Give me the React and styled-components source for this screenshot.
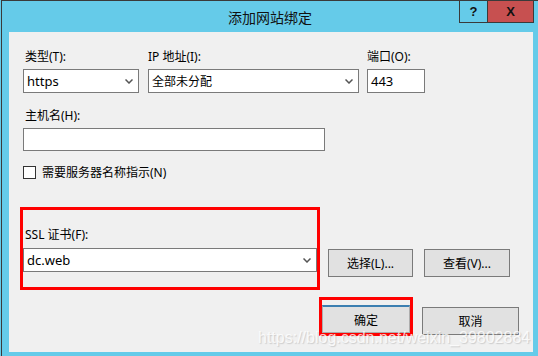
import React from "react";
import styled, { createGlobalStyle } from "styled-components";

const Global = createGlobalStyle`
  html, body { margin: 0; padding: 0; background: #65cbe9; overflow: hidden; }
  body { font-family: "Noto Sans", "Noto Sans CJK SC", sans-serif; }
`;

const Window = styled.div`
  position: relative;
  box-sizing: border-box;
  width: 537px;
  height: 356px;
  margin-left: 1px;
  background: #65cbe9;
  border-left: 1px solid #3a3a3a;
  border-top: 1px solid #3a3a3a;
  display: flex;
  flex-direction: column;
`;

const TitleBar = styled.div`
  position: relative;
  height: 31px;
  display: flex;
  align-items: center;
  justify-content: center;
  flex-shrink: 0;
`;

const Title = styled.div`
  font-family: "Noto Sans CJK SC", sans-serif;
  font-size: 14px;
  color: #111;
  margin-top: 1px;
`;

const Controls = styled.div`
  position: absolute;
  top: -1px;
  right: 4px;
  display: flex;
  height: 23px;
  border: 1px solid #3a3a3a;
  box-sizing: border-box;
`;

const CtrlBtn = styled.div`
  width: ${(p) => p.$w}px;
  background: ${(p) => p.$bg};
  display: flex;
  align-items: center;
  justify-content: center;
  font-family: "Liberation Sans", sans-serif;
  font-weight: bold;
  font-size: 13px;
  color: #111;
  & + & { border-left: 1px solid #3a3a3a; }
`;

const Client = styled.div`
  flex: 1;
  margin: 0 5px 4px 7px;
  background: #f0f0f0;
  padding: 17px 14px 0 14px;
  display: flex;
  flex-direction: column;
  font-size: 12px;
  color: #000;
`;

const Row = styled.div`
  display: flex;
  align-items: ${(p) => p.$align || "flex-start"};
  gap: ${(p) => p.$gap || 0}px;
  margin-top: ${(p) => p.$mt || 0}px;
  justify-content: ${(p) => p.$justify || "flex-start"};
`;

const Field = styled.div`
  display: flex;
  flex-direction: column;
  gap: ${(p) => p.$gap ?? 4}px;
  width: ${(p) => (p.$w ? p.$w + "px" : "auto")};
  margin-left: ${(p) => p.$ml || 0}px;
  margin-top: ${(p) => p.$mt || 0}px;
`;

const Label = styled.div`
  height: 16px;
  line-height: 16px;
  padding-left: ${(p) => p.$pl ?? 2}px;
  white-space: nowrap;
`;

const Box = styled.div`
  box-sizing: border-box;
  height: ${(p) => p.$h || 24}px;
  width: ${(p) => (p.$w ? p.$w + "px" : "100%")};
  background: #fff;
  border: 1px solid #7a7a7a;
  display: flex;
  align-items: center;
  padding-left: 3px;
  font-size: ${(p) => p.$fs || 12}px;
  position: relative;
`;

const Chevron = styled.svg`
  position: absolute;
  right: 5px;
  top: 50%;
  margin-top: -2px;
`;

const Select = ({ w, children, fs }) => (
  <Box $w={w} $fs={fs}>
    {children}
    <Chevron width="8" height="5" viewBox="0 0 8 5">
      <path d="M0.5 0.5 L4 4 L7.5 0.5" stroke="#555" strokeWidth="1.5" fill="none" />
    </Chevron>
  </Box>
);

const CheckRow = styled.div`
  display: flex;
  align-items: center;
  gap: 6px;
  margin-top: 13px;
  height: 16px;
`;

const Check = styled.div`
  box-sizing: border-box;
  width: 13px;
  height: 13px;
  background: #fff;
  border: 1px solid #333;
`;

const RedFrame = styled.div`
  box-sizing: border-box;
  border: 3px solid #ff0000;
  padding: ${(p) => p.$pad};
  width: ${(p) => p.$w}px;
  margin-left: ${(p) => p.$ml || 0}px;
  display: flex;
  flex-direction: column;
`;

const Button = styled.div`
  box-sizing: border-box;
  width: ${(p) => (p.$w ? p.$w + "px" : "100%")};
  height: 28px;
  background: #e1e1e1;
  border: 1px solid ${(p) => (p.$focus ? "#adadad" : "#7a7a7a")};
  border-top-color: ${(p) => (p.$focus ? "#3c7fb1" : "#7a7a7a")};
  border-top-width: ${(p) => (p.$focus ? 2 : 1)}px;
  display: flex;
  align-items: center;
  justify-content: center;
  font-size: 12px;
  margin-top: ${(p) => p.$mt || 0}px;
  margin-bottom: ${(p) => p.$mb || 0}px;
  margin-left: ${(p) => p.$ml || 0}px;
`;

const Watermark = styled.div`
  position: absolute;
  left: 256px;
  top: 328px;
  font-family: "Liberation Sans", Arial, sans-serif;
  font-size: 16px;
  color: rgba(255, 255, 255, 0.8);
  text-shadow: 1px 1px 1px rgba(140, 140, 140, 0.35);
  white-space: nowrap;
  pointer-events: none;
`;

export default function App() {
  return (
    <>
      <Global />
      <Window>
        <TitleBar>
          <Title>添加网站绑定</Title>
          <Controls>
            <CtrlBtn $w={27} $bg="#65cbe9">?</CtrlBtn>
            <CtrlBtn $w={45} $bg="#c75050">X</CtrlBtn>
          </Controls>
        </TitleBar>
        <Client>
          <Row>
            <Field $w={116}>
              <Label>类型(T):</Label>
              <Select w={116} fs={13}>https</Select>
            </Field>
            <Field $w={211} $ml={9}>
              <Label $pl={0}>IP 地址(I):</Label>
              <Select w={211}>全部未分配</Select>
            </Field>
            <Field $w={58} $ml={8}>
              <Label $pl={0}>端口(O):</Label>
              <Box $w={58} $h={24} $fs={13}>443</Box>
            </Field>
          </Row>
          <Field $mt={15}>
            <Label>主机名(H):</Label>
            <Box $w={302} $h={23} />
          </Field>
          <CheckRow>
            <Check />
            <span>需要服务器名称指示(N)</span>
          </CheckRow>
          <Row $mt={27}>
            <RedFrame $w={300} $ml={-3} $pad="17px 0 15px 0">
              <Field $gap={5}>
                <Label>SSL 证书(F):</Label>
                <Select fs={13}>dc.web</Select>
              </Field>
            </RedFrame>
            <Button $w={85} $mt={42} $ml={8}>选择(L)...</Button>
            <Button $w={86} $mt={42} $ml={11}>查看(V)...</Button>
          </Row>
          <Row $mt={7} $align="flex-end" $justify="flex-end" $gap={9}>
            <RedFrame $w={94} $pad="5px 0 0 0">
              <Button $focus>确定</Button>
            </RedFrame>
            <Button $w={97} $mb={1}>取消</Button>
          </Row>
        </Client>
        <Watermark>https://blog.csdn.net/weixin_39802884</Watermark>
      </Window>
    </>
  );
}
